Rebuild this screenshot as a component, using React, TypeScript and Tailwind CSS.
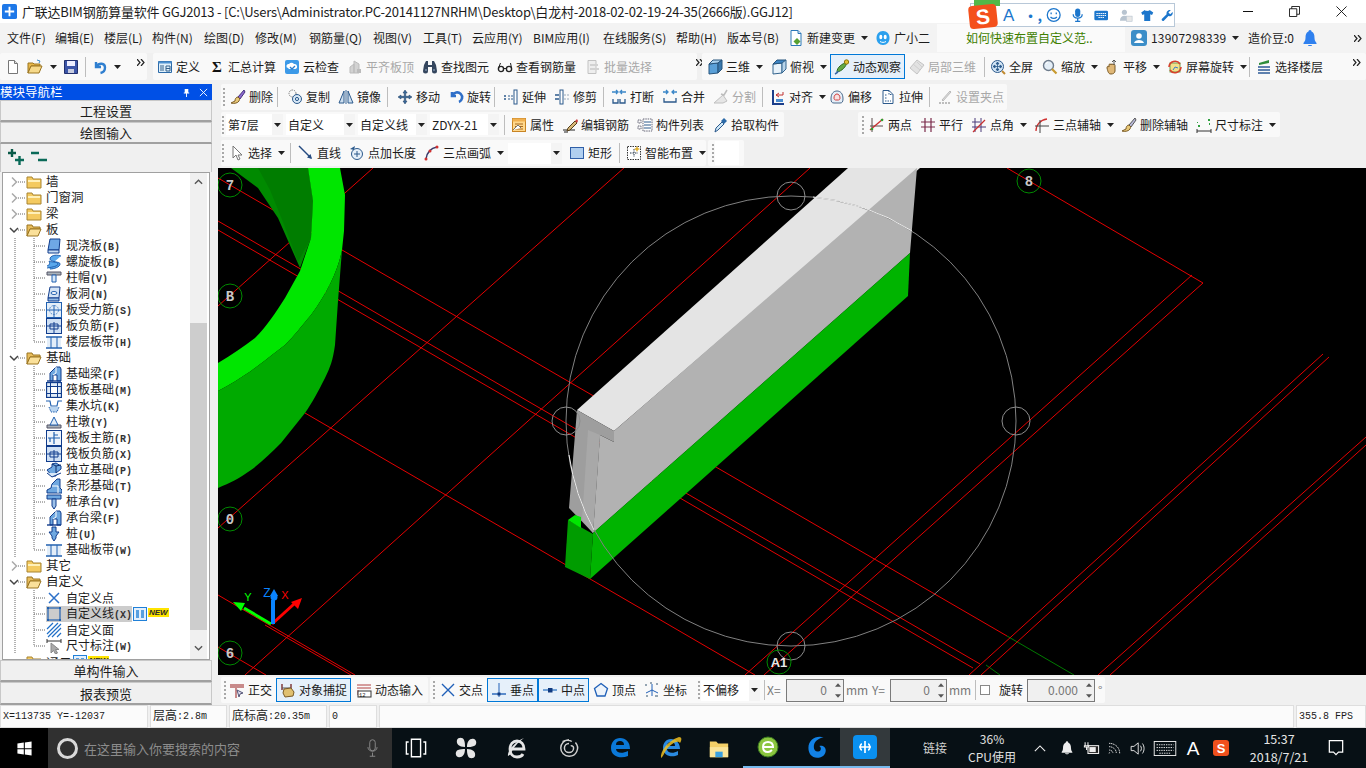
import React from "react";

const ic: Record<string, React.ReactNode> = {
  new: <><path d="M3.5 1.5h6l3 3v10h-9z" fill="#fff" stroke="#777" /><path d="M9.5 1.5v3h3" fill="#ddd" stroke="#777" /></>,
  open: <><path d="M1 4h5l1 1h6v2H4L1 14z" fill="#e8b84a" stroke="#9a7420" /><path d="M1 14l3-7h11l-3 7z" fill="#f6d98a" stroke="#9a7420" /><path d="M10 1l3 1-1 2" fill="none" stroke="#3a8ac8" /></>,
  save: <><path d="M1.5 1.5h13v13h-13z" fill="#3c55a8" stroke="#22306e" /><path d="M4 2h8v5H4z" fill="#eef" /><path d="M5 10h6v4H5z" fill="#c8cde0" /></>,
  undo: <path d="M4 3v5h5M4.5 7.5C7 3.5 13 4 13 8.5c0 3-2 5-4.5 5.5" fill="none" stroke="#2f7fd0" strokeWidth="2.4" />,
  def: <><path d="M1.5 2.5h13v11h-13z" fill="#dff0fb" stroke="#2c6aa8" /><path d="M1.5 2.5h13v2h-13z" fill="#4c91d0" /><path d="M3 7h4M3 9h4M3 11h4M9 7h4v5H9zM9 9.5h4" fill="none" stroke="#33608c" /></>,
  sigma: <text x="3" y="13" fontSize="15" fontWeight="700" fill="#111" fontFamily="Liberation Serif">Σ</text>,
  cloud: <><rect x="1" y="1" width="14" height="14" rx="2" fill="#3c9ae8" /><path d="M4 9a2 2 0 011-4 3 3 0 015 0 2.5 2.5 0 011 5H5z" fill="#fff" /><path d="M6 8l2 2 3-3" stroke="#2a7ccc" strokeWidth="1.3" fill="none" /></>,
  alignG: <><path d="M3 14V8l4-3v9zM7 14V2l5 3v9z" fill="#d2d2d2" stroke="#bbb" /><path d="M10 10h4v4h-4z" fill="#bbb" /></>,
  find: <><path d="M2 6l2-4h2v4h4V2h2l2 4 1 6a2.5 2.5 0 01-5 0V8H6v4a2.5 2.5 0 01-5 0z" fill="#34465e" /><path d="M3 11h2M11 11h2" stroke="#9db4d0" /></>,
  glass: <><circle cx="4" cy="10" r="2.6" fill="none" stroke="#222" strokeWidth="1.4" /><circle cx="12" cy="10" r="2.6" fill="none" stroke="#222" strokeWidth="1.4" /><path d="M6.5 9.5h3M1.5 9l2-5M14.5 9l-1-5" stroke="#222" fill="none" /></>,
  batchG: <><path d="M3 1.5h8v13H3z" fill="#eee" stroke="#c2c2c2" /><path d="M5 5h8v2H5zM5 9h9v2H5z" fill="#d2d2d2" /></>,
  cube: <><path d="M2 5l9-1v10l-9 1z" fill="#5aa0d8" stroke="#27547c" /><path d="M2 5l4-4h9l-4 3z" fill="#a8d0ee" stroke="#27547c" /><path d="M11 4l4-3v9l-4 4z" fill="#3a78ac" stroke="#27547c" /></>,
  cubeT: <><path d="M2 5l9-1v10l-9 1z" fill="#e8f2fa" stroke="#33648e" /><path d="M2 5l4-4h9l-4 3z" fill="#3f86c4" stroke="#27547c" /><path d="M11 4l4-3v9l-4 4z" fill="#b8d4ea" stroke="#33648e" /></>,
  orbit: <><path d="M3 13C3 8 8 5 13 3c-1 5-5 9-10 10z" fill="#64a844" stroke="#2c6a20" /><circle cx="12.5" cy="3" r="2.2" fill="#e0c030" stroke="#8a7410" /><path d="M1 15c2-1 3-2 3-3" stroke="#3465a4" strokeWidth="1.6" fill="none" /></>,
  localG: <><path d="M8 1l7 5-7 9-7-6z" fill="#e2e2e2" stroke="#c4c4c4" /><path d="M4 5l7 6M8 3l5 5" stroke="#cfcfcf" /></>,
  full: <><circle cx="7.5" cy="7.5" r="6" fill="#d4e6f6" stroke="#2c5a8c" /><path d="M7.5 3v9M3 7.5h9M7.5 3l-1.5 2h3zM7.5 12l-1.5-2h3zM3 7.5l2-1.5v3zM12 7.5l-2-1.5v3z" fill="#2c5a8c" stroke="#2c5a8c" strokeWidth=".8" /><path d="M12 12l3 3" stroke="#c08a30" strokeWidth="2" /></>,
  zoom: <><circle cx="6.5" cy="6.5" r="5" fill="#e4eef7" stroke="#6e7c8c" strokeWidth="1.4" /><path d="M10 10l4.5 4.5" stroke="#c89a30" strokeWidth="2.2" /><path d="M4 5a3 3 0 012-2" stroke="#fff" fill="none" /></>,
  pan: <><path d="M3 9c0-2 1-2 2-1V6c0-1.500 2-1.500 2 0 0-1.500 2-1.500 2 0 .5-1 2-1 2 .5V12c0 2-2 3-4 3-2.500 0-3-2-4-6z" fill="#e0b878" stroke="#7a5a24" /><path d="M10 1v5M8 3l2-2 2 2" stroke="#555" fill="none" /></>,
  srot: <><rect x="3" y="4" width="10" height="9" fill="#f4e08a" stroke="#6aa050" /><path d="M2 8a6 6 0 0111-3" stroke="#d8402c" strokeWidth="1.600" fill="none" /><path d="M14 8a6 6 0 01-11 3" stroke="#d8402c" strokeWidth="1.600" fill="none" /><path d="M6 11l2-3 3 1" stroke="#3a7ec8" fill="none" /></>,
  floors: <><path d="M3 4l10-3v3L3 6z" fill="#2e8c3a" /><path d="M2 8h12M2 11h12M2 14h12" stroke="#2c5a96" strokeWidth="1.700" /></>,
  del: <><path d="M14 1L8 8l2 2 5-7z" fill="#8c6ad0" stroke="#44327c" /><path d="M8 8c-2 0-3 2-3 4l-4 2c3 1 7 0 8-2 .5-1 .5-2 1-2z" fill="#e8c878" stroke="#7a5a24" /></>,
  copy: <><circle cx="5.500" cy="4.500" r="3.500" fill="none" stroke="#777" strokeDasharray="1.500 1" /><circle cx="10" cy="10" r="4.500" fill="#d8e8f6" stroke="#2c5a8c" /><circle cx="10" cy="10" r="1.600" fill="none" stroke="#2c5a8c" /></>,
  mirror: <><path d="M8 1v14" stroke="#3a6a9c" /><path d="M6 2L1 14h5z" fill="#cfe0f0" stroke="#2c5a8c" /><path d="M10 2l5 12h-5z" fill="#cfe0f0" stroke="#2c5a8c" /></>,
  move: <path d="M8 1l2.200 3H8.700v3.300H12V6l3 2-3 2V8.700H8.700V12H10l-2 3-2-3h1.300V8.700H4V10L1 8l3-2v1.300h3.300V4H6z" fill="#3a6a9c" stroke="#1c3a5c" strokeWidth=".5" />,
  rot: <path d="M4 3v4h4M4.500 6.500A5 5 0 1111 13" fill="none" stroke="#2f6fc8" strokeWidth="2.600" />,
  extend: <><path d="M1 7h2M1 10h2" stroke="#2c5a8c" strokeWidth="1.400" /><path d="M5 7h5M5 10h5" stroke="#2c5a8c" strokeDasharray="2 1" /><rect x="11" y="1" width="3" height="14" fill="#fff" stroke="#2c5a8c" /></>,
  trim: <><rect x="6" y="1" width="3" height="14" fill="#fff" stroke="#2c5a8c" /><path d="M1 6h4M1 10h4" stroke="#2c5a8c" strokeWidth="1.400" /><path d="M10 6h5M10 10h5" stroke="#9ab" strokeDasharray="2 1" /></>,
  brk: <><path d="M2 10v4h5v-4M9 10v4h5v-4" fill="none" stroke="#2c5a8c" strokeWidth="1.300" /><path d="M1 3h5M10 3h5M5 1l2 2-2 2M11 1L9 3l2 2" stroke="#3a86c8" fill="none" strokeWidth="1.300" /></>,
  merge: <><path d="M2 9v4h12V9" fill="none" stroke="#2c5a8c" strokeWidth="1.300" /><path d="M1 3h5M10 3h5M4 1l2 2-2 2M12 1l-2 2 2 2" stroke="#3a86c8" fill="none" strokeWidth="1.300" /></>,
  splitG: <><path d="M1 14L10 6l4 6-4 2z" fill="#e6e6e6" stroke="#c0c0c0" /><path d="M14 1l-3 5-3-1" fill="none" stroke="#bdbdbd" strokeWidth="1.500" /></>,
  aln: <><path d="M3 1v14h11" fill="none" stroke="#1c3f8c" strokeWidth="2" /><path d="M6 6h7V3M6 6l3-2M6 6l3 2" fill="none" stroke="#c03030" /><rect x="6" y="10" width="7" height="3" fill="#4a8cd0" /></>,
  offset: <><path d="M8 2c3 0 6 2 6 8 0 3-1 4-3 4H5c-2 0-3-1-3-4 0-6 3-8 6-8z" fill="#e6eff8" stroke="#4a6a8c" /><path d="M8 5c1.500 0 3 1.500 3 4 0 1-.5 2-1.500 2h-3C5.500 11 5 10 5 9c0-2.500 1.500-4 3-4z" fill="#f8e0e0" stroke="#d04040" /></>,
  stretch: <><path d="M3 1.500h6l4 4v9H3z" fill="#fff" stroke="#2c5a8c" /><path d="M5 6h2M5 9h2M5 12h6M9 1.500v4h4" stroke="#2c5a8c" fill="none" strokeDasharray="1.500 1" /></>,
  gripG: <><path d="M2 14h12" stroke="#aaa" strokeDasharray="2 1" strokeWidth="1.500" /><path d="M5 11l8-9 1 1-8 9z" fill="#ddd" stroke="#bbb" /></>,
  prop: <><rect x="1.500" y="1.500" width="13" height="13" fill="#ffd88c" stroke="#c88424" /><path d="M1.500 1.500h13v3h-13z" fill="#f0b050" /><path d="M4 7h8M4 9.500h8M4 12h8" stroke="#a86820" /><path d="M2 13l5-5 3 3" fill="#fff" stroke="#777" /></>,
  edit: <><path d="M1 13h12M2 15h4" stroke="#222" strokeWidth="1.200" /><path d="M6 11l7-7 2 2-7 7-3 1z" fill="#d8b878" stroke="#55401c" /><path d="M13 4l2 2 1-2-1-2z" fill="#cc4040" /></>,
  list: <><path d="M1 3h3v3H1zM1 9h3v3H1zM6 2h9v12H6z" fill="#fff" stroke="#667" strokeDasharray="1.500 .8" /><path d="M7 5h7M7 8h7M7 11h7" stroke="#2c5a8c" /></>,
  pick: <><path d="M4 11l6-6 2 2-6 6-3 2z" fill="#cfe8f8" stroke="#2c5a8c" /><path d="M9 4l3-3 3 3-3 3z" fill="#2c6aa8" /></>,
  two: <><path d="M3 1v14M1 9h13" stroke="#5a4a4a" fill="none" /><path d="M1 13L14 2" stroke="#c83030" strokeWidth="1.300" /><circle cx="3" cy="12" r="1.300" fill="#30a030" /><circle cx="13" cy="3" r="1.300" fill="#30a030" /></>,
  par: <path d="M5 1v14M11 1v14M1 5h14M1 10h14" stroke="#7a2a4a" strokeWidth="1.200" />,
  ang: <><path d="M4 1v14M10 1v14M1 10h14M1 5h8" stroke="#4a3a7a" /><path d="M2 15L14 3" stroke="#c83030" strokeWidth="1.300" /></>,
  arcA: <><path d="M2 14C2 8 6 3 13 2" fill="none" stroke="#d03030" strokeWidth="1.300" /><path d="M6 3v13M1 9h14" stroke="#444" /></>,
  delA: <><path d="M14 1L8 8l2 2 5-7z" fill="#b8b8d8" stroke="#555" /><path d="M8 8c-2 0-3 2-3 4l-4 2c3 1 7 0 8-2 .5-1 .5-2 1-2z" fill="#e8c878" stroke="#7a5a24" /></>,
  dim: <><path d="M1 12v4M15 12v4M1 14h14" stroke="#333" /><path d="M2 8h2v2H2zM12 2h2v2h-2zM13 6h1v2h-1zM1 5h1v1H1z" fill="#30a040" /></>,
  cur: <path d="M4 1v12l3-3 2 5 2-1-2-4h4z" fill="#fff" stroke="#777" />,
  line: <><path d="M1 1l12 12" stroke="#244a80" strokeWidth="1.400" /><path d="M14 14l-5-1.500 3.500-3.500z" fill="#244a80" /></>,
  ptlen: <><circle cx="8" cy="9" r="5.500" fill="#e6f0fa" stroke="#2c5a8c" /><path d="M8 6v6M5 9h6" stroke="#2c5a8c" /><path d="M1 4l5-3-1 4" fill="#2c5a8c" /></>,
  arc3: <><path d="M2 14C3 7 7 3 13 2" fill="none" stroke="#3a3a6a" strokeWidth="1.500" /><circle cx="2" cy="14" r="1.500" fill="#d03030" /><circle cx="6" cy="6" r="1.500" fill="#d03030" /><circle cx="13" cy="2" r="1.500" fill="#d03030" /></>,
  rect: <rect x="1.500" y="2.500" width="13" height="11" fill="#b0cff0" stroke="#2f5fa8" />,
  smart: <><rect x="1.500" y="1.500" width="13" height="13" fill="#fff" stroke="#333" strokeDasharray="1.500 1" /><path d="M8 4v8M4 8h8" stroke="#234" strokeDasharray="1.500 1" /><path d="M11 1l1 2 2 1-2 1-1 2-1-2-2-1 2-1z" fill="#e0b030" /></>,
  ortho: <><path d="M1 3h14M1 5h14M7 5v11" stroke="#c88a8a" strokeWidth="2" /><path d="M8 8l6 3-3 1-1 3z" fill="#dde" stroke="#557" /></>,
  snap: <><path d="M2 2v6M11 2v6" stroke="#7a3030" strokeWidth="1.400" /><path d="M2 6h9" stroke="#555" /><path d="M4 7l7-1 3 4-1 4-8 1-2-4z" fill="#e0c070" stroke="#7a5a24" /></>,
  dyn: <><path d="M1 3h14M1 6h14M2 8v5" stroke="#b04040" /><rect x="2" y="9" width="13" height="6" fill="#fff" stroke="#333" /><text x="3" y="14.500" fontSize="5.500" fill="#111" fontFamily="Liberation Mono">12</text></>,
  cross: <path d="M2 2l12 12M14 2L2 14" stroke="#2060b8" strokeWidth="1.400" />,
  perp: <><path d="M1 12h14" stroke="#2060b8" strokeWidth="1.400" /><path d="M8 1v14" stroke="#2060b8" /><rect x="6.500" y="10.500" width="3" height="3" fill="#103a80" /></>,
  mid: <><path d="M1 8h14" stroke="#4080c8" strokeWidth="1.400" /><rect x="6" y="6" width="4.500" height="4.500" fill="#103a80" /></>,
  vert: <path d="M8 1.500L14.500 6.500 12 14H4L1.500 6.500z" fill="#eef4fb" stroke="#2060b8" strokeWidth="1.300" />,
  coord: <><path d="M8 2v12M2 11l6-3 6 3" stroke="#2060b8" fill="none" /><path d="M1 3h2M6 1h2M12 2h2M2 14h2M11 14h3" stroke="#30506c" /></>,
  doc: <><path d="M3 .5h7l3 3v12H3z" fill="#fff" stroke="#2c78b8" /><path d="M10 .5v3h3" fill="#cde" stroke="#2c78b8" /><path d="M9 8l3.500 3.500L9 15l-3.500-3.500z" fill="#58a030" /></>,
  bot: <><path d="M8 1c4 0 6.500 3 6.500 7s-2.500 7-6.500 7-6.500-3-6.500-7S4 1 8 1z" fill="#2aa0ee" /><ellipse cx="5.800" cy="7" rx="1.500" ry="2.200" fill="#fff" /><ellipse cx="10.200" cy="7" rx="1.500" ry="2.200" fill="#fff" /><path d="M5 11.500c2 1.200 4 1.200 6 0" stroke="#fff" fill="none" /></>,
  user: <><rect x="0" y="0" width="16" height="16" rx="3" fill="#3c8ec8" /><circle cx="8" cy="6" r="2.800" fill="#fff" /><path d="M3 13c1-4 9-4 10 0z" fill="#fff" /></>,
  bell: <path d="M8 0c1 0 1.500 1 1.500 1.500C12 2.500 12.500 5 12.500 8c0 3 1.500 4 2 5v1h-13v-1c.5-1 2-2 2-5 0-3 .5-5.500 3-6.500C6.500 1 7 0 8 0zM6 15h4c0 1-1 1-2 1s-2 0-2-1z" fill="#2f80ee" />,
  folder: <><path d="M1 3h5l1 2h8v9H1z" fill="#f4ca60" stroke="#a88430" /><path d="M2 6h12v2H2z" fill="#fff0b8" /></>,
  fopen: <><path d="M1 3h5l1 2h7v2H4l-3 7z" fill="#e8bd5c" stroke="#9a7420" /><path d="M1 14l3-7h11l-3 7z" fill="#fae09a" stroke="#9a7420" /></>,
  slab: <><path d="M4 1h10l-1 11H2z" fill="#6fa8e6" stroke="#103c8c" /><path d="M2 12h11v3H2z" fill="#c8ddf4" stroke="#103c8c" /></>,
  spiral: <path d="M15 2C9 0 4 2 4 5c0 3 8 2 8 5 0 2-5 3-11 4M1 12c3-1 3-3 2-5C6 9 14 7 14 10c0 3-6 5-10 5" fill="#5aa8ec" stroke="#2060b0" />,
  cap: <><path d="M1 2h14v3H1z" fill="#aab4bc" stroke="#556" /><path d="M6 5h4v7H6z" fill="#d8e8f8" stroke="#2060b0" /></>,
  hole: <><path d="M4 1h10l-1 11H2z" fill="#d4e4f6" stroke="#103c8c" /><ellipse cx="8" cy="7" rx="3" ry="1.500" fill="#fff" stroke="#2060b0" /><path d="M2 12h11v3H2z" fill="#90b8e4" stroke="#103c8c" /></>,
  sfb: <><rect x=".5" y=".5" width="15" height="15" fill="#e4eef8" stroke="#2060b0" /><circle cx="8" cy="8" r="4.500" fill="none" stroke="#5a90d0" strokeDasharray="2 1" /><path d="M1 8h14M8 3v12" stroke="#2060b0" /></>,
  nfb: <><rect x=".5" y=".5" width="15" height="15" fill="#cfe0f4" stroke="#103c8c" /><path d="M1 8h14M8 4v11M4 6h8v5H4z" stroke="#103c8c" fill="none" /></>,
  band: <><path d="M1 4h14v9H1z" fill="#c8ddf4" opacity=".5" /><path d="M0 3h16M0 14h16" stroke="#2060b0" strokeWidth="1.500" /><path d="M5 3v11M11 3v11" stroke="#2060b0" /></>,
  beam: <><path d="M4 15V7L10 1h4l1 2v12h-4V9H7v6z" fill="#6fa8e0" stroke="#103c8c" /><path d="M1 15h14" stroke="#103c8c" strokeWidth="1.400" /><path d="M10 1v6l-3 2" stroke="#fff" fill="none" /></>,
  raft: <><rect x=".5" y=".5" width="15" height="15" fill="#e0ecf8" stroke="#103c8c" strokeWidth="1.300" /><rect x="4.500" y="4.500" width="7" height="7" fill="#fff" stroke="#103c8c" /><path d="M1 4.500h3M12 4.500h3M1 11.500h3M12 11.500h3M4.500 1v3M11.500 1v3M4.500 12v3M11.500 12v3" stroke="#103c8c" /></>,
  pit: <><path d="M0 3h4l1 5h6l1-5h4" fill="none" stroke="#2060b0" strokeWidth="1.200" /><path d="M3 9l2 5h6l2-5" fill="#b8d4f0" stroke="#2060b0" strokeDasharray="1.500 1" /></>,
  ped: <><path d="M1 11h14v3H1z" fill="#a8b0b8" stroke="#556" /><path d="M8 3l4 8H4z" fill="#e0ecf8" stroke="#2060b0" /></>,
  rmain: <><rect x=".5" y=".5" width="15" height="15" fill="#eef4fb" stroke="#103c8c" /><path d="M2 8h12M8 2v12M8 5h4M4 8v4" stroke="#2060b0" strokeWidth="1.200" /></>,
  iso: <><path d="M1 8l5-3v-3l4-1 5 3v3l-5 4v3H6z" fill="#6fa8e0" stroke="#103c8c" /><path d="M6 2l4 2v9M10 4l5-1" stroke="#0f2f6c" fill="none" /><path d="M1 11l5 4 9-4" fill="#d8e8f8" stroke="#103c8c" /></>,
  strip: <><path d="M1 15v-3l4-2 1-4 5-5h3v9l2 2v3z" fill="#6fa8e0" stroke="#103c8c" /><path d="M6 8h6v7" stroke="#fff" fill="none" /></>,
  pilecap: <><path d="M1 1h14v4H1z" fill="#6fa8e0" stroke="#103c8c" /><path d="M6 5h4v7l-2 3-2-3z" fill="#9cc0e8" stroke="#103c8c" /></>,
  pile: <><path d="M6 1h4v5h3L10 10v2l-2 3-2-3v-2L3 6h3z" fill="#6fa8e0" stroke="#103c8c" /></>,
  pt: <path d="M3 3l10 10M13 3L3 13" stroke="#2c70c8" strokeWidth="1.500" />,
  lin: <><rect x="2" y="2" width="12" height="12" fill="none" stroke="#2060b0" strokeWidth="1.200" /><path d="M1 1h2v2H1zM13 1h2v2h-2zM1 13h2v2H1zM13 13h2v2h-2z" fill="#2060b0" /></>,
  face: <path d="M1 7l6-6M1 12L12 1M2 15L15 2M6 15l9-9M11 15l4-4" stroke="#2070c8" strokeWidth="1.200" />,
  dimt: <><path d="M1 1v4M15 1v4M1 3h14" stroke="#333" /><path d="M5 5v10l2.500-2.500 2 3.500 2-1-2-3.500H13z" fill="#aaa" stroke="#888" /></>,
};

const I = ({ n, c = "" }: { n: string; c?: string }) => (
  <svg viewBox="0 0 16 16" className={`w-4 h-4 shrink-0 ${c}`}>{ic[n]}</svg>
);
const Caret = ({ c = "" }: { c?: string }) => (
  <svg viewBox="0 0 7 4" className={`w-[7px] h-1 shrink-0 ${c}`}><path d="M0 0h7L3.500 4z" fill="#222" /></svg>
);
const Sep = ({ c = "" }: { c?: string }) => <div className={`w-px h-5 bg-[#bdbdbd] shrink-0 ${c}`} />;
const Grip = ({ c = "" }: { c?: string }) => (
  <svg viewBox="0 0 3 18" className={`w-[3px] h-[18px] shrink-0 ${c}`}>
    {[1, 5, 9, 13, 17].map((y) => <rect key={y} x="0" y={y - 1} width="2" height="2" fill="#a8a8a8" />)}
  </svg>
);
const More = ({ c = "" }: { c?: string }) => (
  <svg viewBox="0 0 8 7" className={`w-2 h-[7px] shrink-0 ${c}`}><path d="M0 0l3 3.500L0 7M4 0l3 3.500L4 7" fill="none" stroke="#222" strokeWidth="1.200" /></svg>
);
function T({ w, n, t, caret, dim, on }: { w: string; n?: string; t: string; caret?: boolean; dim?: boolean; on?: boolean }) {
  return (
    <div className={`flex items-center shrink-0 whitespace-nowrap ${w} ${on ? "self-stretch my-[1px] pl-[3px] border border-[#0078d7] bg-[#e6f0fa]" : "h-full"} ${dim ? "text-[#a8a8a8]" : ""}`}>
      {n && <div className="w-[19px] shrink-0"><I n={n} /></div>}
      <span>{t}</span>
      {caret && <Caret c="ml-[6px]" />}
    </div>
  );
}
const Group = ({ c, children }: { c: string; children: React.ReactNode }) => (
  <div className={`flex items-center shrink-0 bg-[#f9f9f9] rounded-[2px] ${c}`}>{children}</div>
);
const Combo = ({ w, t }: { w: string; t: string }) => (
  <div className={`flex items-center h-[21px] bg-white shrink-0 overflow-hidden ${w}`}>
    <span className="flex-1 pl-[2px] overflow-hidden whitespace-nowrap">{t}</span>
    <div className="w-[11px] h-full bg-[#f4f4f4] flex items-center justify-center shrink-0"><Caret /></div>
  </div>
);
const Spin = ({ w, v }: { w: string; v: string }) => (
  <div className={`flex items-center h-[23px] border border-[#7a7a7a] bg-[#f0f0f0] shrink-0 ${w}`}>
    <span className="flex-1 text-right text-[#777] pr-[5px]">{v}</span>
    <div className="w-[11px] flex flex-col gap-[7px] items-center shrink-0">
      <svg viewBox="0 0 7 4" className="w-[6px] h-1"><path d="M0 4h7L3.500 0z" fill="#555" /></svg>
      <svg viewBox="0 0 7 4" className="w-[6px] h-1"><path d="M0 0h7L3.500 4z" fill="#555" /></svg>
    </div>
  </div>
);
const Btn = ({ t, c }: { t: string; c: string }) => (
  <div className={`flex items-center justify-center bg-[#f0f0f0] border border-[#c8c8c8] border-b-[2px] border-b-[#a0a0a0] text-[13px] ${c}`}>{t}</div>
);

type Row = { k: "c"; t: string; open: boolean } | { k: "i"; n: string; t: string; last?: boolean; sel?: boolean };
const tree: Row[] = [
  { k: "c", t: "墙", open: false }, { k: "c", t: "门窗洞", open: false }, { k: "c", t: "梁", open: false }, { k: "c", t: "板", open: true },
  { k: "i", n: "slab", t: "现浇板(B)" }, { k: "i", n: "spiral", t: "螺旋板(B)" }, { k: "i", n: "cap", t: "柱帽(V)" }, { k: "i", n: "hole", t: "板洞(N)" },
  { k: "i", n: "sfb", t: "板受力筋(S)" }, { k: "i", n: "nfb", t: "板负筋(F)" }, { k: "i", n: "band", t: "楼层板带(H)", last: true },
  { k: "c", t: "基础", open: true },
  { k: "i", n: "beam", t: "基础梁(F)" }, { k: "i", n: "raft", t: "筏板基础(M)" }, { k: "i", n: "pit", t: "集水坑(K)" }, { k: "i", n: "ped", t: "柱墩(Y)" },
  { k: "i", n: "rmain", t: "筏板主筋(R)" }, { k: "i", n: "nfb", t: "筏板负筋(X)" }, { k: "i", n: "iso", t: "独立基础(P)" }, { k: "i", n: "strip", t: "条形基础(T)" },
  { k: "i", n: "pilecap", t: "桩承台(V)" }, { k: "i", n: "beam", t: "承台梁(F)" }, { k: "i", n: "pile", t: "桩(U)" }, { k: "i", n: "band", t: "基础板带(W)", last: true },
  { k: "c", t: "其它", open: false }, { k: "c", t: "自定义", open: true },
  { k: "i", n: "pt", t: "自定义点" }, { k: "i", n: "lin", t: "自定义线(X)", sel: true }, { k: "i", n: "face", t: "自定义面" }, { k: "i", n: "dimt", t: "尺寸标注(W)", last: true },
];
const NewMark = () => (
  <>
    <svg viewBox="0 0 14 14" className="w-[14px] h-[14px] shrink-0 ml-px"><rect x=".5" y=".5" width="13" height="13" fill="#e4f0fc" stroke="#2080d8" /><path d="M3 3h3v8H3zM8 3h3v8H8z" fill="#58a0e0" /></svg>
    <span className="text-[8px] leading-[9px] h-[9px] self-start mt-[2px] ml-px px-px bg-[#ffe400] italic font-bold text-[#2a2a2a] font-['Liberation_Sans',sans-serif]">NEW</span>
  </>
);
function TreeRow({ r }: { r: Row }) {
  if (r.k === "c")
    return (
      <div className="flex items-center h-4 shrink-0">
        <svg viewBox="0 0 23 16" className="w-[23px] h-4 shrink-0">
          <path d="M15 8h8" stroke="#666" strokeDasharray="1 1" />
          {r.open ? <path d="M7 6l4 4 4-4" fill="none" stroke="#444" strokeWidth="1.500" /> : <path d="M9 3.500l4.500 4.500L9 12.500" fill="none" stroke="#aaa" strokeWidth="1.500" />}
        </svg>
        <I n={r.open ? "fopen" : "folder"} />
        <span className="ml-1 text-[12.500px] pb-[2px]">{r.t}</span>
      </div>
    );
  const [a, b] = r.t.split("(");
  return (
    <div className="flex items-center h-4 shrink-0">
      <svg viewBox="0 0 43 16" className="w-[43px] h-4 shrink-0">
        <path d={`M12 0v16M31 0v${r.last ? 8 : 16}M31 8h12`} stroke="#666" strokeDasharray="1 1" />
      </svg>
      <div className={`flex items-center h-4 ${r.sel ? "bg-[#cccccc] w-[86px]" : ""}`}>
        <I n={r.n} />
        <span className="ml-1 whitespace-nowrap">{a}{b && <span className="text-[10px] font-['Liberation_Mono',monospace] font-bold text-[#333]">({b}</span>}</span>
      </div>
      {r.sel && <NewMark />}
    </div>
  );
}

const bubbles: [number, number, string][] = [[230, 185, "7"], [230, 296, "B"], [230, 519, "0"], [230, 653, "6"], [1029, 181, "8"]];
const red = [
  "218,178 1007,636", "218,221 980,664", "218,230 973,668", "305,413 755,675", "218,595 355,675", "265,625 351,675", "218,647 266,675",
  "373,168 218,306", "625,167 218,528", "810,168 245,675", "1192,275 745,675", "1203,283 764,675", "1007,168 1203,283",
  "1323,354 969,675", "1329,357 981,675", "1366,437 1098,675", "1366,445 1110,675",
];
function Canvas() {
  return (
    <svg viewBox="218 168 1148 507" className="w-full h-[507px] block bg-black shrink-0">
      <path d="M1007 636L1074 675M986 665L1000 675" stroke="#007a00" fill="none" />
      {red.map((p) => <polyline key={p} points={p} fill="none" stroke="#ff0000" strokeWidth=".9" />)}
      <path d="M231 168L258 188L278 218L300 268L311 238L313 201L308 168Z" fill="#008a00" />
      <path d="M258 168L270 190L283 222L298 262L311 238L313 201L308 168Z" fill="#007d00" />
      <path d="M308 168H340L345 195L344 231L342 250C338 270 328 292 311 315C300 328 295 335 285 345C272 355 262 363 251 371C240 378 230 385 218 391V363C232 355 244 346 255 338C267 326 276 312 285 298L300 271L311 238L313 201Z" fill="#00e600" />
      <path d="M342 250L338 301L335 345C333 360 330 368 325 378C318 392 312 403 305 413L285 438L281 443C272 452 262 462 251 470C240 478 230 483 218 488V391C230 385 240 378 251 371C262 363 272 355 285 345C295 335 300 328 311 315C328 292 338 270 342 250Z" fill="#00aa00" />
      <path d="M577 410L848 168H920L614 431Z" fill="#e4e4e4" />
      <path d="M917 168L910 253L593 533L600 435L614 442V431Z" fill="#b2b2b2" />
      <path d="M577 410L614 431V442L600 435L593 533L569 508Z" fill="#9e9e9e" />
      <path d="M600 435L593 533L582 520L588 430Z" fill="#a8a8a8" />
      <path d="M910 253L908 296L590 579L593 533Z" fill="#00b400" />
      <path d="M568 520L593 534L590 579L565 567Z" fill="#009c00" />
      <path d="M568 520L575 515L581 517V528Z" fill="#00e600" />
      <circle cx="791" cy="421" r="225" fill="none" stroke="#808080" />
      <path d="M813 197A225 225 0 0 1 912 231M569 455A225 225 0 0 0 594 530" fill="none" stroke="#ececec" />
      {[[791, 196], [1016, 421], [566, 421], [791, 646]].map(([x, y]) => <circle key={x + "," + y} cx={x} cy={y} r="14" fill="none" stroke="#8c8c8c" />)}
      {bubbles.map(([x, y, t]) => (
        <g key={t}>
          <circle cx={x} cy={y} r="12" fill="none" stroke="#008a00" />
          <text x={x} y={y + 5} textAnchor="middle" fontSize="14" fontWeight="700" fill="#c8c8c8" fontFamily="Liberation Mono">{t}</text>
        </g>
      ))}
      <circle cx="779" cy="662" r="12" fill="none" stroke="#008a00" />
      <text x="779" y="667" textAnchor="middle" fontSize="13" fontWeight="700" fill="#e8e8e8" fontFamily="Liberation Sans">A1</text>
      <path d="M271 624L244 608" stroke="#00ff00" strokeWidth="3" /><path d="M233 602L245 603L241 611Z" fill="#00ff00" />
      <path d="M272 624L294 604" stroke="#ff0000" strokeWidth="3" /><path d="M302 598L298 609L291 602Z" fill="#ff0000" />
      <path d="M273 624V600" stroke="#0a84ff" strokeWidth="4" /><circle cx="274" cy="597" r="3.500" fill="#0a84ff" /><path d="M274 589L270 596H278Z" fill="#0a84ff" />
      <text x="248" y="601" textAnchor="middle" fontSize="11" fill="#00ff00" fontFamily="Liberation Sans">Y</text>
      <text x="267" y="597" textAnchor="middle" fontSize="12" fill="#0a84ff" fontFamily="Liberation Sans">Z</text>
      <text x="285" y="599" textAnchor="middle" fontSize="11" fill="#ff0000" fontFamily="Liberation Sans">X</text>
    </svg>
  );
}
const sg = (d: React.ReactNode, c: string) => <svg viewBox="0 0 24 24" className={c}>{d}</svg>;
const Cell = ({ c, children }: { c: string; children: React.ReactNode }) => (
  <div className={`flex items-center justify-center shrink-0 h-full ${c}`}>{children}</div>
);

export default function App() {
  return (
    <div className="relative w-[1366px] h-[768px] overflow-hidden bg-[#f0f0f0] text-[12px] leading-none text-[#1c1c1c] font-['Noto_Sans_CJK_SC','Liberation_Sans',sans-serif]">
      {/* title */}
      <div className="flex items-center h-[23px] bg-white">
        <svg viewBox="0 0 16 16" className="w-[15px] h-[15px] ml-[2px] shrink-0"><rect width="16" height="16" rx="2" fill="#1e78e8" /><path d="M7 3h2v4h4v2H9v4H7V9H3V7h4z" fill="#fff" /></svg>
        <span className="ml-[5px] text-[13px] whitespace-nowrap tracking-[-0.21px]">广联达BIM钢筋算量软件 GGJ2013 - [C:\Users\Administrator.PC-20141127NRHM\Desktop\白龙村-2018-02-02-19-24-35(2666版).GGJ12]</span>
        <div className="ml-auto flex h-full shrink-0">
          <Cell c="w-[46px]"><div className="w-[10px] h-px bg-[#111]" /></Cell>
          <Cell c="w-[46px]"><svg viewBox="0 0 12 12" className="w-[11px] h-[11px]"><path d="M.5 3h8v8.500h-8zM3 3V.5h8.500v8.500H8.500" fill="none" stroke="#111" /></svg></Cell>
          <Cell c="w-[49px]"><svg viewBox="0 0 12 12" className="w-[11px] h-[11px]"><path d="M.5.5l11 11M11.500.5l-11 11" stroke="#111" /></svg></Cell>
        </div>
      </div>
      {/* menu */}
      <div className="flex items-center h-[30px] pl-[7px] bg-[#f3f3f3]">
        <span className="w-[48px] shrink-0">文件(F)</span><span className="w-[49px] shrink-0">编辑(E)</span><span className="w-[48px] shrink-0">楼层(L)</span>
        <span className="w-[52px] shrink-0">构件(N)</span><span className="w-[51px] shrink-0">绘图(D)</span><span className="w-[54px] shrink-0">修改(M)</span>
        <span className="w-[64px] shrink-0">钢筋量(Q)</span><span className="w-[50px] shrink-0">视图(V)</span><span className="w-[49px] shrink-0">工具(T)</span>
        <span className="w-[61px] shrink-0">云应用(Y)</span><span className="w-[70px] shrink-0">BIM应用(I)</span><span className="w-[73px] shrink-0">在线服务(S)</span>
        <span className="w-[51px] shrink-0">帮助(H)</span><span className="w-[61px] shrink-0">版本号(B)</span>
        <T w="w-[87px]" n="doc" t="新建变更" caret />
        <T w="w-[62px]" n="bot" t="广小二" />
        <div className="w-[188px] h-[28px] bg-[#fafafa] flex items-center pl-[29px] text-[#3f7f00] shrink-0">如何快速布置自定义范..</div>
        <div className="ml-[6px] flex items-center w-[117px] shrink-0 whitespace-nowrap"><div className="w-[20px] shrink-0"><I n="user" /></div><span className="tracking-[0.2px]">13907298339</span><Caret c="ml-[6px]" /></div>
        <span className="whitespace-nowrap shrink-0">造价豆:0</span>
        <I n="bell" c="ml-[8px]" />
        <More c="ml-[36px]" />
      </div>
      {/* toolbar 1 */}
      <div className="flex items-start h-[31px]">
        <Group c="w-[147px] h-[27px] pl-[5px]">
          <I n="new" /><I n="open" c="ml-[6px]" /><Caret c="ml-[7px]" /><I n="save" c="ml-[6px]" /><Sep c="ml-[6px]" /><I n="undo" c="ml-[6px]" /><Caret c="ml-[6px]" /><More c="ml-[16px] -mt-2" />
        </Group>
        <Group c="ml-[6px] w-[544px] h-[27px] pl-[4px]">
          <T w="w-[52px]" n="def" t="定义" /><T w="w-[75px]" n="sigma" t="汇总计算" /><T w="w-[63px]" n="cloud" t="云检查" /><T w="w-[75px]" n="alignG" t="平齐板顶" dim />
          <T w="w-[75px]" n="find" t="查找图元" /><T w="w-[88px]" n="glass" t="查看钢筋量" /><T w="w-[70px]" n="batchG" t="批量选择" dim />
        </Group>
        <More c="ml-[-1px] mt-[6px]" />
        <Group c="ml-[-2px] flex-1 h-[27px] pl-[5px]">
          <T w="w-[64px]" n="cube" t="三维" caret /><T w="w-[59px]" n="cubeT" t="俯视" caret /><T w="w-[75px]" n="orbit" t="动态观察" on />
          <div className="w-1 shrink-0" /><T w="w-[75px]" n="localG" t="局部三维" dim /><Sep c="mr-[5px]" />
          <T w="w-[52px]" n="full" t="全屏" /><T w="w-[62px]" n="zoom" t="缩放" caret /><T w="w-[63px]" n="pan" t="平移" caret /><T w="w-[82px]" n="srot" t="屏幕旋转" caret /><Sep c="mr-[6px]" />
          <T w="w-[89px]" n="floors" t="选择楼层" /><More c="ml-2 -mt-2" />
        </Group>
      </div>
      {/* main */}
      <div className="flex h-[621px]">
        <div className="w-[218px] shrink-0">
          <div className="w-[212px] h-[621px] flex flex-col">
            <div className="h-4 bg-[#0050e6] text-white text-[12.500px] flex items-center shrink-0">
              <span>模块导航栏</span>
              <svg viewBox="0 0 10 10" className="w-[9px] h-[9px] ml-[119px]"><path d="M3 1h4v4h1v1H5.500v4h-1V6H2V5h1z" fill="#fff" /></svg>
              <svg viewBox="0 0 10 10" className="w-[9px] h-[9px] ml-[8px]"><path d="M1 1l8 8M9 1L1 9" stroke="#fff" /></svg>
            </div>
            <Btn t="工程设置" c="h-[22px] shrink-0" />
            <Btn t="绘图输入" c="h-[22px] shrink-0" />
            <div className="h-[28px] shrink-0 pl-[6px] pt-[4px] flex gap-[5px] border-x border-[#c8c8c8]">
              <svg viewBox="0 0 18 18" className="w-[18px] h-[18px]"><path d="M1 5h8M5 1v8" stroke="#0a5a48" strokeWidth="2.400" /><path d="M8 12h9M12.500 8v9" stroke="#0a6a58" strokeWidth="2.400" /></svg>
              <svg viewBox="0 0 18 18" className="w-[18px] h-[18px]"><path d="M1 5h8M8 12h9" stroke="#0a6a58" strokeWidth="2.400" /></svg>
            </div>
            <div className="h-[488px] shrink-0 mx-[2px] flex border border-[#a0a0a0] bg-white overflow-hidden">
              <div className="flex-1 flex flex-col pt-px overflow-hidden">
                {tree.map((r) => <TreeRow key={r.t + (r.k === "i" ? r.n : "")} r={r} />)}
                <div className="flex items-center h-4 shrink-0">
                  <svg viewBox="0 0 23 16" className="w-[23px] h-4 shrink-0" />
                  <I n="folder" /><span className="ml-1 text-[13px]">通风</span><NewMark />
                </div>
              </div>
              <div className="w-[17px] shrink-0 mr-[2px] bg-[#f0f0f0] flex flex-col items-center">
                <svg viewBox="0 0 10 6" className="w-[9px] h-[6px] mt-[6px] shrink-0"><path d="M1 5l4-4 4 4" fill="none" stroke="#555" strokeWidth="1.500" /></svg>
                <div className="h-[138px] shrink-0" />
                <div className="w-[17px] h-[307px] bg-[#cdcdcd] shrink-0" />
                <div className="h-[15px] shrink-0" />
                <svg viewBox="0 0 10 6" className="w-[9px] h-[6px] shrink-0"><path d="M1 1l4 4 4-4" fill="none" stroke="#555" strokeWidth="1.500" /></svg>
              </div>
            </div>
            <Btn t="单构件输入" c="h-[22px] shrink-0" />
            <Btn t="报表预览" c="h-[23px] shrink-0" />
          </div>
        </div>
        <div className="flex-1 flex flex-col min-w-0">
          <div className="flex items-start h-[28px] pl-[3px] shrink-0">
            <Group c="w-[786px] h-[26px] pl-[2px]">
              <Grip c="mr-1" /><T w="w-[47px]" n="del" t="删除" /><Sep c="mr-[9px]" /><T w="w-[51px]" n="copy" t="复制" /><T w="w-[49px]" n="mirror" t="镜像" /><Sep c="mr-[9px]" />
              <T w="w-[51px]" n="move" t="移动" /><T w="w-[46px]" n="rot" t="旋转" /><Sep c="mr-2" /><T w="w-[51px]" n="extend" t="延伸" /><T w="w-[49px]" n="trim" t="修剪" /><Sep c="mr-[7px]" />
              <T w="w-[51px]" n="brk" t="打断" /><T w="w-[51px]" n="merge" t="合并" /><T w="w-[49px]" n="splitG" t="分割" dim /><Sep c="mr-[7px]" />
              <T w="w-[59px]" n="aln" t="对齐" caret /><T w="w-[51px]" n="offset" t="偏移" /><T w="w-[49px]" n="stretch" t="拉伸" /><Sep c="mr-[7px]" /><T w="w-[70px]" n="gripG" t="设置夹点" dim />
            </Group>
          </div>
          <div className="flex items-start h-[28px] pl-[3px] shrink-0">
            <Group c="w-[563px] h-[25px] pl-px">
              <Grip c="mr-px" /><Combo w="w-[57px]" t="第7层" /><div className="w-[3px] shrink-0" /><Combo w="w-[69px]" t="自定义" /><div className="w-[3px] shrink-0" /><Combo w="w-[69px]" t="自定义线" /><div className="w-[3px] shrink-0" /><Combo w="w-[69px]" t="ZDYX-21" />
              <Sep c="ml-[5px] mr-[6px]" /><T w="w-[51px]" n="prop" t="属性" /><T w="w-[75px]" n="edit" t="编辑钢筋" /><T w="w-[75px]" n="list" t="构件列表" /><T w="w-[72px]" n="pick" t="拾取构件" />
            </Group>
            <Group c="ml-[74px] w-[422px] h-[25px] pl-1">
              <Grip c="mr-1" /><T w="w-[51px]" n="two" t="两点" /><T w="w-[51px]" n="par" t="平行" /><T w="w-[63px]" n="ang" t="点角" caret /><T w="w-[87px]" n="arcA" t="三点辅轴" caret /><T w="w-[75px]" n="delA" t="删除辅轴" /><T w="w-[84px]" n="dim" t="尺寸标注" caret />
            </Group>
          </div>
          <div className="flex items-start h-[28px] pl-[3px] shrink-0">
            <Group c="w-[485px] h-[26px] pl-px">
              <Grip c="mr-1" /><T w="w-[61px]" n="cur" t="选择" caret /><Sep c="mr-[7px]" /><T w="w-[51px]" n="line" t="直线" /><T w="w-[75px]" n="ptlen" t="点加长度" /><T w="w-[84px]" n="arc3" t="三点画弧" caret />
              <Combo w="w-[54px]" t="" /><div className="w-[7px] shrink-0" /><T w="w-[50px]" n="rect" t="矩形" /><Sep c="mr-[6px]" /><T w="w-[80px]" n="smart" t="智能布置" caret />
            </Group>
            <Group c="ml-[2px] w-[36px] h-[26px] pl-1">
              <Grip /><div className="w-6 h-[24px] bg-white shrink-0" />
            </Group>
          </div>
          <Canvas />
          <div className="flex items-center h-[30px] pl-[3px] shrink-0">
            <Group c="w-[207px] h-[26px] pl-[3px]">
              <Grip c="mr-[2px]" /><T w="w-[47px]" n="ortho" t="正交" /><T w="w-[75px]" n="snap" t="对象捕捉" on /><div className="w-[5px] shrink-0" /><T w="w-[72px]" n="dyn" t="动态输入" />
            </Group>
            <Group c="ml-[2px] w-[675px] h-[26px] pl-[3px]">
              <Grip c="mr-1" /><T w="w-[47px]" n="cross" t="交点" /><T w="w-[51px]" n="perp" t="垂点" on /><T w="w-[51px]" n="mid" t="中点" on /><div className="w-1 shrink-0" /><T w="w-[51px]" n="vert" t="顶点" /><T w="w-[52px]" n="coord" t="坐标" />
              <Grip c="ml-[2px]" /><Combo w="w-[59px]" t="不偏移" /><Sep c="ml-1" />
              <span className="ml-[2px] w-[19px] text-[#777] shrink-0">X=</span><Spin w="w-[58px]" v="0" /><span className="ml-[2px] w-[26px] text-[#777] shrink-0">mm</span>
              <span className="w-[18px] text-[#777] shrink-0">Y=</span><Spin w="w-[57px]" v="0" /><span className="ml-[2px] w-[26px] text-[#777] shrink-0">mm</span>
              <Sep /><div className="ml-1 w-[10px] h-[10px] border border-[#888] bg-white shrink-0" /><span className="ml-[9px] w-[28px] shrink-0">旋转</span><Spin w="w-[68px]" v="0.000" /><span className="ml-[3px] text-[#777]">°</span>
            </Group>
          </div>
        </div>
      </div>
      {/* status */}
      <div className="flex h-[23px] gap-[2px] font-['Liberation_Mono','Noto_Sans_CJK_SC',monospace] text-[10px]">
        <div className="w-[148px] shrink-0 flex items-center pl-[2px] border border-[#dedede] bg-[#fbfbfb]">X=113735 Y=-12037</div>
        <div className="w-[77px] shrink-0 flex items-center pl-[2px] border border-[#dedede] bg-[#fbfbfb]"><span className="text-[12px]">层高</span>:2.8m</div>
        <div className="w-[98px] shrink-0 flex items-center pl-[2px] border border-[#dedede] bg-[#fbfbfb]"><span className="text-[12px]">底标高</span>:20.35m</div>
        <div className="w-[48px] shrink-0 flex items-center pl-[2px] border border-[#dedede] bg-[#fbfbfb]">0</div>
        <div className="flex-1 border border-[#dedede] bg-[#fbfbfb]" />
        <div className="w-[70px] shrink-0 flex items-center pl-[2px] border border-[#dedede] bg-[#fbfbfb]">355.8 FPS</div>
      </div>
      {/* taskbar */}
      <div className="flex h-[40px] bg-[#071015] text-[#e6e6e6]">
        <Cell c="w-[48px] bg-black">{sg(<path d="M2 5l9-1.300V11.500H2zM12.500 3.500L22 2v9.500h-9.500zM2 13h9v7.500L2 19zM12.500 13H22v9l-9.500-1.500z" fill="#fff" />, "w-[17px] h-[17px]")}</Cell>
        <div className="w-[344px] h-full bg-[#303030] flex items-center pl-[9px] shrink-0 text-[#8c8c8c] text-[13px]">
          <div className="w-[21px] h-[21px] rounded-full border-[3px] border-[#d8d8d8] shrink-0" />
          <span className="ml-[6px]">在这里输入你要搜索的内容</span>
          <svg viewBox="0 0 12 20" className="ml-[127px] w-[11px] h-[20px] shrink-0"><rect x="3" y="1" width="6" height="12" rx="3" fill="none" stroke="#8c8c8c" /><path d="M1 9c0 6 10 6 10 0M6 15v4M3 19h6" fill="none" stroke="#8c8c8c" /></svg>
        </div>
        <Cell c="w-[48px]">{sg(<path d="M7 2.500h10v19H7zM4 5.500H1.500v13H4M20 5.500h2.500v13H20" fill="none" stroke="#fff" strokeWidth="1.500" />, "w-[22px] h-[22px]")}</Cell>
        <Cell c="w-[51px]">{sg(<path d="M11 11C5 11 2 8 3 4c1-3 6-3 7 0 1 2 1 5 1 7zM13 11c0-6 3-9 7-8 3 1 3 6 0 7-2 1-5 1-7 1zM13 13c6 0 9 3 8 7-1 3-6 3-7 0-1-2-1-5-1-7zM11 13c0 6-3 9-7 8-3-1-3-6 0-7 2-1 5-1 7-1z" fill="#e6e6e6" />, "w-[24px] h-[24px]")}</Cell>
        <Cell c="w-[52px]">{sg(<><path d="M6 13h13c0-5-3-8-7-8s-7 3-7 8 3 8 7 8c2.500 0 5-1 6-3" fill="none" stroke="#e6e6e6" strokeWidth="2.800" /><path d="M3 20c-1-4 6-14 16-18-6 4-12 11-13 16z" fill="#e6e6e6" /></>, "w-[24px] h-[24px]")}</Cell>
        <Cell c="w-[51px]">{sg(<path d="M12 3a9 9 0 100 18 9 9 0 007-15M12 7a5 5 0 105 5c0-2-2-3-3-2M5 5c3-2 8-2 10 0" fill="none" stroke="#cfcfcf" strokeWidth="1.600" />, "w-[22px] h-[22px]")}</Cell>
        <Cell c="w-[52px]">{sg(<path d="M12 2c6 0 10 4 10 11H8c0 4 6 5 12 2v5c-7 3-17 1-17-8C3 6 7 2 12 2zm-4 7h8c0-3-1.500-4-4-4S8 6 8 9z" fill="#0a78d8" />, "w-[24px] h-[24px]")}</Cell>
        <Cell c="w-[49px]">{sg(<><path d="M12 3c5 0 9 4 9 10H8c0 4 6 5 11 2v4c-6 3-15 1-15-7 0-5 3-9 8-9zm-4 7h8c0-3-1.500-4-4-4s-4 1-4 4z" fill="#2a8ae0" /><path d="M2 22C1 16 8 5 20 1c3 0 3 3 1 6-2-3-8 0-13 6-3 4-4 8-6 9z" fill="#f0c020" opacity=".85" /></>, "w-[24px] h-[24px]")}</Cell>
        <Cell c="w-[48px]">{sg(<><path d="M2 5h7l2 2h11v15H2z" fill="#f4d068" /><path d="M2 11h20v11H2z" fill="#fbe59a" /><path d="M8 16h8v6H8z" fill="#3aa0e0" /></>, "w-[22px] h-[22px]")}</Cell>
        <Cell c="w-[49px] border-b-2 border-[#76b9ed]">{sg(<><circle cx="12" cy="12" r="10" fill="#8bc53f" stroke="#3a7a20" /><path d="M7 12h10c0-3-2-5-5-5s-5 2-5 5 2 5 5 5c2 0 3-1 4-2" fill="none" stroke="#fff" strokeWidth="2" /></>, "w-[24px] h-[24px]")}</Cell>
        <Cell c="w-[48px] border-b-2 border-[#76b9ed]">{sg(<path d="M19 3C12 1 5 5 5 13c0 5 3 9 8 9s8-3 8-7c0-3-3-5-6-4 2 1 2 4 0 5-3 1-5-1-5-4 0-5 4-8 9-9z" fill="#1282e6" />, "w-[26px] h-[26px]")}</Cell>
        <Cell c="w-[50px] bg-[#33393c] border-b-2 border-[#76b9ed]"><div className="w-[24px] h-[24px] rounded-[4px] bg-[#0a90f0] flex items-center justify-center">{sg(<path d="M4 12h16M12 4v16M8 8c-3 0-3 8 0 8M16 8c3 0 3 8 0 8" fill="none" stroke="#fff" strokeWidth="2.200" />, "w-[18px] h-[18px]")}</div></Cell>
        <div className="w-[70px] shrink-0 flex items-center pl-[33px] text-[#d0d0d0]">链接</div>
        <div className="w-[64px] shrink-0 flex flex-col items-center justify-center gap-[6px] text-[#e0e0e0]"><span>36%</span><span>CPU使用</span></div>
        <Cell c="w-[29px] ml-px"><svg viewBox="0 0 14 8" className="w-[12px] h-[7px]"><path d="M1 7l6-6 6 6" fill="none" stroke="#eee" strokeWidth="1.300" /></svg></Cell>
        <Cell c="w-[25px]">{sg(<path d="M12 2c1 0 2 1 2 2 3 1 4 4 4 8 0 3 1 5 2 6v1H4v-1c1-1 2-3 2-6 0-4 1-7 4-8 0-1 1-2 2-2zM9 20h6c0 2-6 2-6 0z" fill="#eee" />, "w-[16px] h-[16px]")}</Cell>
        <Cell c="w-[24px]">{sg(<><rect x="7" y="8" width="15" height="11" fill="#222" stroke="#eee" strokeWidth="1.500" /><rect x="9" y="10" width="9" height="7" fill="#eee" /><path d="M3 3v5M7 3v5M2 8h6v2H2zM5 10v4" stroke="#eee" strokeWidth="1.500" /></>, "w-[17px] h-[17px]")}</Cell>
        <Cell c="w-[24px]">{sg(<path d="M3 20a1 1 0 012 0M3 15c3 0 6 2 6 5M3 10c6 0 11 4 11 10M3 5c9 0 16 6 16 15" fill="none" stroke="#ddd" strokeWidth="1.400" strokeDasharray="2 .8" />, "w-[16px] h-[16px]")}</Cell>
        <Cell c="w-[21px]">{sg(<path d="M3 9h4l6-5v16l-6-5H3zM16 8c2 2 2 6 0 8M19 5c3 4 3 10 0 14" fill="none" stroke="#eee" strokeWidth="1.300" />, "w-[17px] h-[17px]")}</Cell>
        <Cell c="w-[33px]"><svg viewBox="0 0 24 16" className="w-[24px] h-[15px]"><rect x=".5" y=".5" width="23" height="15" fill="none" stroke="#eee" /><path d="M3 4h18M3 7h18M3 10h18M6 13h12" stroke="#eee" strokeDasharray="1.500 1" /></svg></Cell>
        <Cell c="w-[24px] text-[19px] font-['Liberation_Sans',sans-serif] text-white">A</Cell>
        <Cell c="w-[32px]"><div className="w-[16px] h-[16px] rounded-[3px] bg-[#f0501c] text-white text-[13px] font-bold flex items-center justify-center font-['Liberation_Sans',sans-serif]">S</div></Cell>
        <div className="w-[84px] shrink-0 flex flex-col items-center justify-center gap-[6px] text-[12.500px]"><span>15:37</span><span>2018/7/21</span></div>
        <Cell c="w-[30px]">{sg(<path d="M4 3h16v14h-5l-3 3-3-3H4z" fill="none" stroke="#fff" strokeWidth="1.500" />, "w-[20px] h-[20px]")}</Cell>
      </div>
      {/* Sogou IME bar */}
      <div className="absolute left-[970px] top-[3px] w-[205px] h-[24px] bg-white border border-[#b8c8d8] flex items-center pl-[31px] gap-[8px]">
        <span className="w-[14px] text-center text-[#1c76cc] text-[17px] font-['Liberation_Sans',sans-serif]">A</span>
        <span className="w-[12px] text-center text-[#1c76cc] text-[14px] font-bold">•,</span>
        {sg(<><circle cx="12" cy="12" r="10" fill="none" stroke="#1c76cc" strokeWidth="2" /><path d="M8 8v3M16 8v3M7 15c3 3 7 3 10 0" stroke="#1c76cc" strokeWidth="2" fill="none" /></>, "w-[16px] h-[16px] ml-[3px]")}
        {sg(<><rect x="8" y="2" width="8" height="13" rx="4" fill="#1c76cc" /><path d="M5 11c0 8 14 8 14 0M12 18v4M8 22h8" stroke="#1c76cc" strokeWidth="2" fill="none" /></>, "w-[16px] h-[18px]")}
        {sg(<><rect x="2" y="5" width="20" height="14" rx="2" fill="#1c76cc" /><path d="M5 9h14M5 12h14M8 15h8" stroke="#fff" strokeWidth="1.500" strokeDasharray="2 1" /></>, "w-[17px] h-[17px]")}
        {sg(<><circle cx="10" cy="7" r="4" fill="#b8c4d0" /><path d="M3 20c0-10 14-10 14 0z" fill="#b8c4d0" /><rect x="13" y="13" width="9" height="8" fill="#e8e8e8" stroke="#b8c4d0" /></>, "w-[16px] h-[17px]")}
        {sg(<path d="M8 3L2 7l2 4 3-1v11h10V10l3 1 2-4-6-4c-1 2-7 2-8 0z" fill="#1c76cc" />, "w-[15px] h-[15px] -ml-px")}
        {sg(<path d="M21 6l-4 4-3-3 4-4c-4-1-8 2-7 7L3 18c-1 2 1 4 3 3l8-8c5 1 8-3 7-7z" fill="#1c76cc" />, "w-[15px] h-[15px] -ml-[3px]")}
      </div>
      <div className="absolute left-[974px] top-0 w-[26px] h-[6px] bg-[#53b848]" />
      <div className="absolute left-[969px] top-[5px] w-[28px] h-[23px] rounded-[4px] rotate-[-6deg] bg-[#f4501c] text-white text-[21px] font-bold flex items-center justify-center font-['Liberation_Sans',sans-serif]">S</div>
    </div>
  );
}
